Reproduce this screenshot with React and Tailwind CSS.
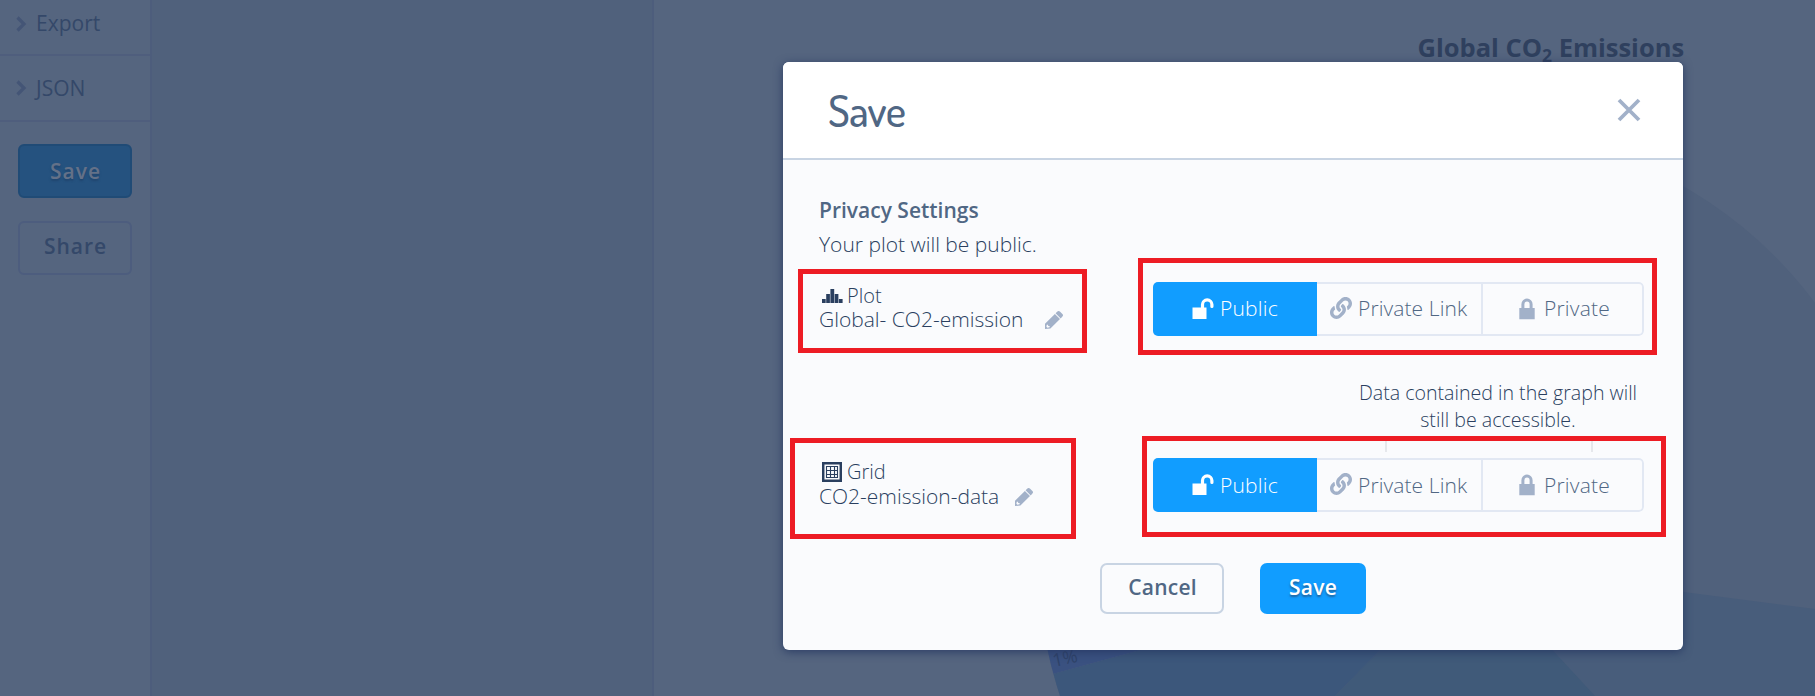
import { FaLink } from "react-icons/fa";

const Chevron = () => (
  <svg className="h-4 w-[11px] shrink-0" viewBox="0 0 11 16" fill="none" stroke="#445576" strokeWidth="3.2">
    <path d="M1.500 1.500 8 8l-6.500 6.500" />
  </svg>
);

const Unlock = () => (
  <svg className="h-[22px] w-[22px]" viewBox="0 0 22 22">
    <path d="M0.5 9.5h14v11.5h-14z" fill="#fff" />
    <path d="M10.500 10V6.600a4.700 4.700 0 0 1 9.400 0V8.500" fill="none" stroke="#fff" strokeWidth="3.200" strokeLinecap="round" />
  </svg>
);

const Lock = () => (
  <svg className="h-[22px] w-4" viewBox="0 0 16 22">
    <path d="M0.300 10h15.400v11.300H0.300z" fill="#a2b1c9" />
    <path d="M3.900 11V6.200a4.100 4.100 0 0 1 8.200 0V11" fill="none" stroke="#a2b1c9" strokeWidth="3" />
  </svg>
);

const Pencil = () => (
  <svg className="h-[18px] w-[18px]" viewBox="0 0 18 18" fill="#a2b1c9">
    <path d="M9.900 3 15 8.100 5.400 17.600 0 18V12.700zM1.800 13.700l-.4 2.100 1 1 2.200-.5v-1.200H3.100v-1.400z" fillRule="evenodd" />
    <path d="m10.600 2.300 1.800-1.700a1.800 1.800 0 0 1 2.500 0l2.500 2.500a1.800 1.800 0 0 1 0 2.500l-1.700 1.800z" />
  </svg>
);

const Bars = () => (
  <svg className="h-[14px] w-[21px]" viewBox="0 0 21 14" fill="#2a3f5f">
    <path d="M0 10h3.700v4H0zM4.200 5h3.700v9H4.200zM8.400 0h3.800v14H8.400zM12.700 5h3.700v9h-3.700zM16.900 10h3.700v4h-3.700z" />
  </svg>
);

const GridIcon = () => (
  <svg className="h-[20px] w-[20px]" viewBox="0 0 20 20" fill="none" stroke="#2a3f5f">
    <path d="M1.200 1.200h17.600v17.600H1.200z" strokeWidth="2.500" />
    <path d="M4.500 4.500h11v11h-11zM8.500 4.500v11M12.500 4.500v11M4.500 8.500h11M4.500 12.500h11" strokeWidth="1.100" />
  </svg>
);

function PrivacyToggle({ shift = "" }) {
  const cell = "flex h-full items-center";
  return (
    <div className="flex h-[54px] w-[491px] overflow-hidden rounded-[5px] text-[21px] font-light leading-7 tracking-[0.2px] text-[#506784]">
      <div className={cell + " w-[164px] gap-[6px] bg-[#119dff] pl-[39px] text-white"}>
        <Unlock />
        <span className={shift}>Public</span>
      </div>
      <div className={cell + " w-[166px] gap-[6px] border-y-2 border-r-2 border-[#e2e8f3] pl-[13px]"}>
        <FaLink className="-mt-0.5 h-[22px] w-[22px] text-[#a2b1c9]" />
        <span className={"whitespace-nowrap tracking-[0.1px] " + shift}>Private Link</span>
      </div>
      <div className={cell + " w-[161px] gap-[9px] rounded-r-[5px] border-y-2 border-r-2 border-[#e2e8f3] pl-[36px]"}>
        <Lock />
        <span className={shift}>Private</span>
      </div>
    </div>
  );
}

function Chart() {
  return (
    <svg className="h-[696px] w-[1161px]" viewBox="654 0 1161 696">
      <clipPath id="pie">
        <circle cx="1469" cy="560" r="431" />
      </clipPath>
      <g clipPath="url(#pie)">
        <path d="M1038 129h862v900h-862z" fill="#50617c" />
        <path d="M1469 564 1900 620V1000H1780z" fill="#485d7b" />
        <path d="M1469 560 1810 928H1106z" fill="#405a79" />
        <path d="M1469 560 1106 928H1000V688.500z" fill="#3c577b" />
        <path d="M1469 560 1000 688.500V500z" fill="#3a5180" />
      </g>
      <text x="1054" y="667" transform="rotate(-12 1054 667)" fontSize="18" fill="#2f4369">1%</text>
      <text x="1417.500" y="57" fontSize="25.500" fontWeight="700" fill="#2f405e">
        Global CO
        <tspan fontSize="17.500" dy="5">2</tspan>
        <tspan dy="-5"> Emissions</tspan>
      </text>
    </svg>
  );
}

export default function App() {
  return (
    <div className="relative flex h-[696px] w-[1815px] overflow-hidden bg-[#55657f] font-['Open_Sans',sans-serif]">
      <aside className="flex w-[152px] shrink-0 flex-col border-r-2 border-[#4d5d7c] text-[21px] text-[#344869]">
        <div className="flex h-[56px] items-center gap-[9px] border-b-2 border-[#4f5e7d] pb-[7px] pl-[16px]">
          <Chevron />
          <span className="mt-px">Export</span>
        </div>
        <div className="flex h-[66px] items-center gap-[9px] border-b-2 border-[#4f5e7d] pl-[16px]">
          <Chevron />
          <span className="mt-0.5">JSON</span>
        </div>
        <div className="mt-[22px] flex flex-col gap-[23px] pl-[18px] font-semibold tracking-[1px]">
          <div className="flex h-[54px] w-[114px] items-center justify-center rounded-[6px] border-2 border-[#204b76] bg-[#25527f] pl-px pt-px text-[#647188] [text-shadow:0_2px_2px_rgba(31,66,106,0.8)]">
            Save
          </div>
          <div className="flex h-[54px] w-[114px] items-center justify-center rounded-[6px] border-2 border-[#4d5d7e] pb-[2px] pl-px">
            Share
          </div>
        </div>
      </aside>
      <div className="w-[502px] shrink-0 border-r-2 border-[#4d5d7c] bg-[#50617c]" />
      <Chart />

      <div className="absolute left-[783px] top-[62px] flex h-[588px] w-[900px] flex-col overflow-hidden rounded-[6px] bg-[#fafbfd] text-[#2a3f5f] shadow-[0_2px_10px_rgba(37,54,96,0.85)]">
        <div className="flex h-[98px] items-center justify-between border-b-2 border-[#c8d4e3] bg-white pl-[45px] pr-[42px]">
          <h1 className="font-['Dosis','Lato',sans-serif] text-[43.5px] font-medium leading-none tracking-[-0.7px] text-[#506784]">Save</h1>
          <svg className="h-[24px] w-[24px]" viewBox="0 0 24 24" stroke="#a2b1c9" strokeWidth="3.800">
            <path d="M2 2l20 20M22 2 2 22" />
          </svg>
        </div>

        <div className="flex flex-col pl-[36px] pr-[39px] pt-[36px]">
          <h2 className="text-[21px] font-semibold leading-7 text-[#506784]">Privacy Settings</h2>
          <p className="mt-[6px] text-[21px] font-light leading-7">Your plot will be public.</p>

          <div className="mt-[24px] flex items-start justify-between">
            <div className="pt-px font-light">
              <div className="flex h-[25px] items-center gap-[4px] pl-[3px] text-[20px]">
                <Bars />
                Plot
              </div>
              <div className="flex h-[24px] items-center gap-[21px] text-[21px]">
                Global- CO2-emission
                <Pencil />
              </div>
            </div>
            <PrivacyToggle shift="-mt-[3px]" />
          </div>

          <div className="mt-[43px] flex w-[292px] flex-col items-center self-end text-center text-[19.600px] font-light leading-[27px]">
            <p className="whitespace-nowrap">
              Data contained in the graph will
              <br />
              still be accessible.
            </p>
            <div className="mb-[6px] mr-[18px] mt-[8px] h-[11px] w-[208px] border-x-2 border-[#e6e8ec]" />
          </div>

          <div className="flex items-start justify-between">
            <div className="pt-px font-light">
              <div className="flex h-[25px] items-center gap-[5px] pl-[3px] text-[20px]">
                <GridIcon />
                Grid
              </div>
              <div className="flex h-[26px] items-center gap-[16px] text-[21px]">
                CO2-emission-data
                <Pencil />
              </div>
            </div>
            <PrivacyToggle shift="-mt-px" />
          </div>
        </div>

        <div className="mt-[51px] flex justify-center gap-[36px] text-[21px] font-semibold tracking-[0.250px]">
          <button className="h-[51px] w-[124px] rounded-[7px] border-2 border-[#c8d4e3] pb-px pl-px text-[#506784]">Cancel</button>
          <button className="h-[51px] w-[106px] rounded-[7px] bg-[#119dff] pb-px text-white [text-shadow:0_2px_2px_rgba(42,63,95,0.6)]">
            Save
          </button>
        </div>
      </div>

      <div className="absolute left-[798px] top-[269px] h-[84px] w-[289px] border-5 border-[#ed1c24]" />
      <div className="absolute left-[1138px] top-[258px] h-[97px] w-[519px] border-5 border-[#ed1c24]" />
      <div className="absolute left-[790px] top-[438px] h-[101px] w-[286px] border-5 border-[#ed1c24]" />
      <div className="absolute left-[1142px] top-[436px] h-[101px] w-[524px] border-5 border-[#ed1c24]" />
    </div>
  );
}
